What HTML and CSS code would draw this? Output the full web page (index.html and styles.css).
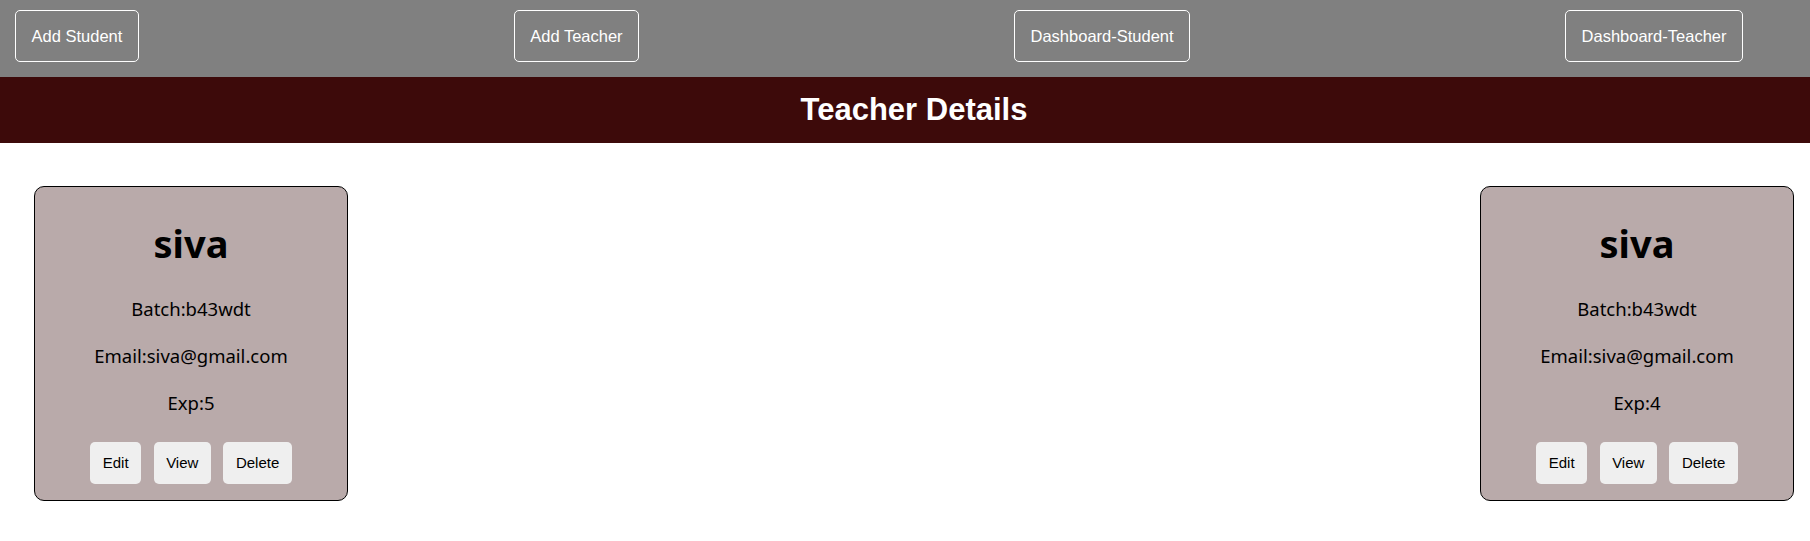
FILE: index.html
```html
<!DOCTYPE html>
<html lang="en">
<head>
<meta charset="utf-8">
<title>Teacher Details</title>
<link rel="stylesheet" href="styles.css">
</head>
<body>
<nav class="nav">
  <button class="nav-btn">Add Student</button>
  <button class="nav-btn">Add Teacher</button>
  <button class="nav-btn">Dashboard-Student</button>
  <button class="nav-btn">Dashboard-Teacher</button>
</nav>
<header class="title-bar">
  <h2 class="title">Teacher Details</h2>
</header>
<main class="cards">
  <div class="card">
    <h1 class="card-name">siva</h1>
    <p class="card-line">Batch:b43wdt</p>
    <p class="card-line">Email:siva@gmail.com</p>
    <p class="card-line">Exp:5</p>
    <div class="actions">
      <button class="act-btn">Edit</button>
      <button class="act-btn">View</button>
      <button class="act-btn">Delete</button>
    </div>
  </div>
  <div class="card">
    <h1 class="card-name">siva</h1>
    <p class="card-line">Batch:b43wdt</p>
    <p class="card-line">Email:siva@gmail.com</p>
    <p class="card-line">Exp:4</p>
    <div class="actions">
      <button class="act-btn">Edit</button>
      <button class="act-btn">View</button>
      <button class="act-btn">Delete</button>
    </div>
  </div>
</main>
</body>
</html>
```
FILE: styles.css
```css
* { box-sizing: border-box; }
html, body { margin: 0; padding: 0; background: #ffffff; }
body { font-family: "Liberation Sans", Arial, sans-serif; }

.nav {
  height: 77px;
  background: #808080;
  display: flex;
  justify-content: space-between;
  align-items: flex-start;
  padding: 10px 67px 0 15px;
}
.nav-btn {
  background: transparent;
  color: #ffffff;
  border: 1px solid #ffffff;
  border-radius: 5px;
  font-family: "Liberation Sans", Arial, sans-serif;
  font-size: 16.5px;
  line-height: 19px;
  padding: 15.5px 15.5px;
  margin: 0;
}

.title-bar {
  height: 66px;
  background: #3d0a0a;
  display: flex;
  align-items: center;
  justify-content: center;
  padding-left: 18px;
}
.title {
  margin: 0;
  color: #ffffff;
  font-family: "Liberation Sans", Arial, sans-serif;
  font-weight: bold;
  font-size: 31px;
  line-height: 36px;
}

.cards {
  display: flex;
  justify-content: space-between;
  align-items: flex-start;
  padding: 43px 16px 0 34px;
}
.card {
  width: 314px;
  height: 315px;
  border: 1px solid #000000;
  border-radius: 10px;
  background: #b9aaaa;
  text-align: center;
  font-family: "Noto Sans", "Open Sans", sans-serif;
  color: #000000;
  display: flow-root;
}
.card-name {
  font-size: 38px;
  font-weight: bold;
  line-height: 53px;
  margin: 30px 0 25px;
}
.card-line {
  font-size: 18.5px;
  line-height: 27px;
  margin: 20px 0;
}
.actions {
  margin-top: 26px;
  display: flex;
  justify-content: center;
  gap: 12.5px;
}
.act-btn {
  background: #efefef;
  border: none;
  border-radius: 5px;
  font-family: "Liberation Sans", Arial, sans-serif;
  font-size: 15px;
  line-height: 18px;
  padding: 12px 12.5px;
  color: #000000;
  margin: 0;
}
```
